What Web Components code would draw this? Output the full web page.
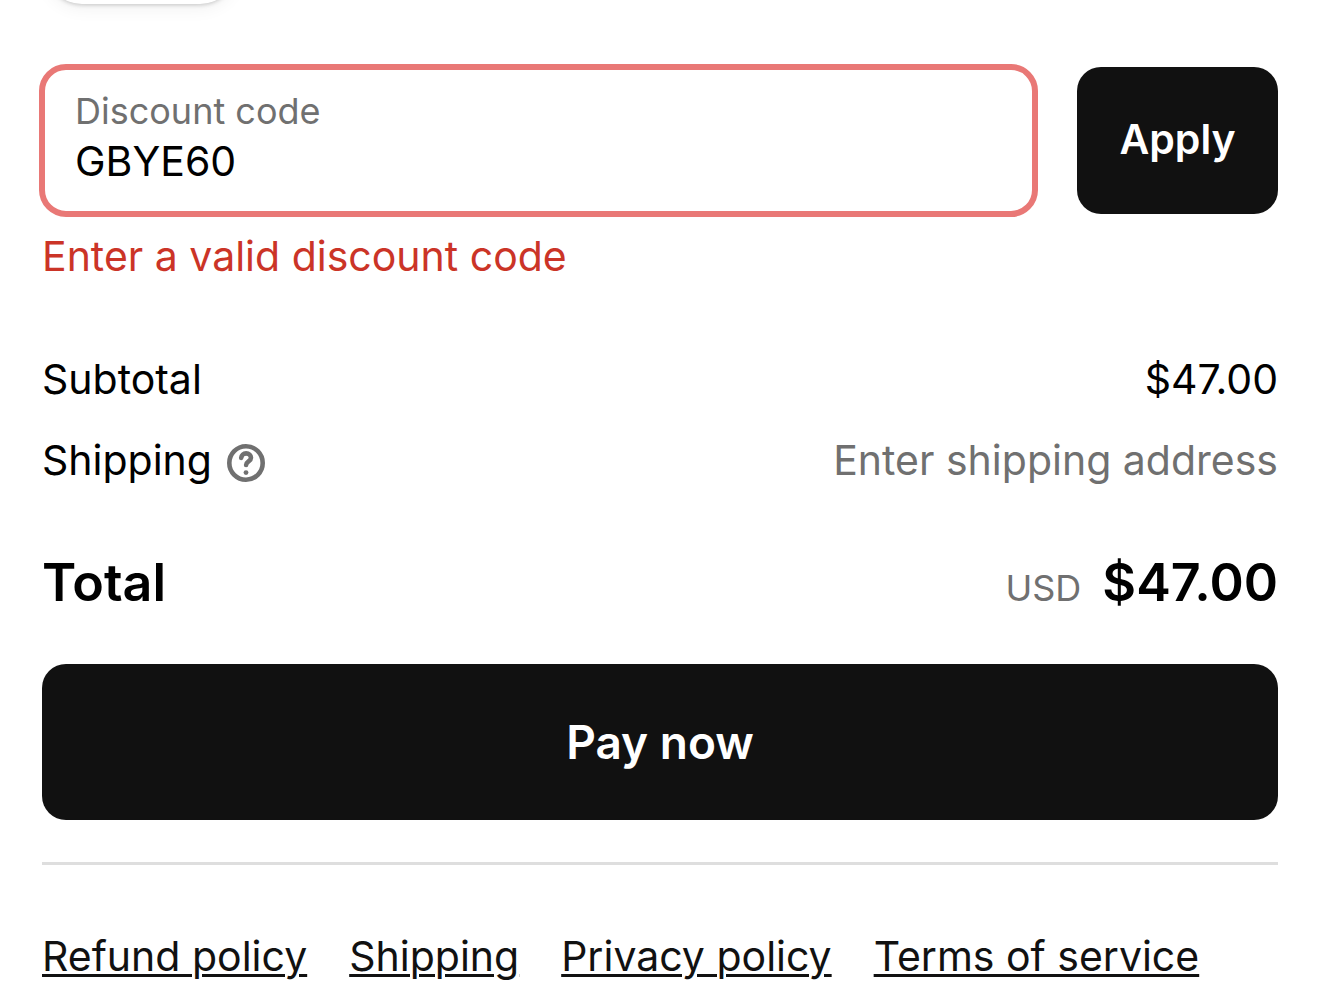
<!DOCTYPE html>
<html lang="en">
<head>
<meta charset="utf-8">
<title>Checkout</title>
<style>
body{margin:0;background:#fff;color:#000;font-family:Inter,"Liberation Sans",sans-serif;font-size:41px;line-height:54px}
</style>
</head>
<body>
<checkout-summary></checkout-summary>
<script>
const define=(name,html)=>customElements.define(name,class extends HTMLElement{
  constructor(){super();this.attachShadow({mode:'open'}).innerHTML=html;}
});

define('field-chip',`<style>
:host{display:flex;align-items:flex-end;height:4px;padding:0 46px 26px;overflow:hidden}
div{flex:none;width:190px;height:72px;border-radius:36px;background:#fff;box-shadow:0 1px 4px #0003,0 4px 18px #0000000f}
</style><div></div>`);

define('discount-form',`<style>
:host{display:block}
form{display:flex;align-items:center;gap:39px;margin:0 0 0 -3px}
.field{flex:1;min-width:0;box-sizing:border-box;height:153px;border:6px solid #e97876;border-radius:27px;padding:19px 30px;display:flex;flex-direction:column}
label{font-size:36px;line-height:45px;color:#707070}
input{font:inherit;line-height:54px;height:54px;width:100%;border:0;padding:0;margin:0;outline:0;background:none;color:#000}
button{font:inherit;font-weight:600;width:201px;height:147px;border:0;padding:0 0 3px;border-radius:24px;background:#111;color:#fff}
p{margin:12px 0 0;color:#cb3427}
</style>
<form onsubmit="return false">
<div class="field"><label for="code">Discount code</label><input id="code" value="GBYE60" aria-invalid="true" aria-describedby="err"></div>
<button type="submit">Apply</button>
</form>
<p id="err"><slot></slot></p>`);

define('help-icon',`<style>
:host{display:block;padding-top:6px}svg{display:block}
</style>
<svg width="38" height="38" viewBox="0 0 38 38" fill="none" stroke="#707070" role="img" aria-label="Help"><circle cx="19" cy="19" r="16.700" stroke-width="4.600"/><path d="M14.200 13.900c.2-2.800 2.200-4.500 4.900-4.500 2.900 0 4.900 1.800 4.900 4.300 0 3.700-4.800 3.700-4.900 7.300" stroke-width="4.600" stroke-linecap="round"/><circle cx="19" cy="28.600" r="2.400" fill="#707070" stroke="none"/></svg>`);

define('cost-line',`<style>
:host{display:flex;justify-content:space-between;align-items:center}
.name,.value{display:flex;align-items:center;gap:15px}
:host([muted]) .value{color:#707070}
:host([total]){font-size:52px;line-height:66px;font-weight:600;align-items:baseline}
:host([total]) .value{align-items:baseline;gap:21px}
</style>
<span class="name"><slot></slot></span><span class="value"><slot name="value"></slot></span>`);

define('pay-button',`<style>
:host{display:block}
button{display:block;width:100%;height:156px;border:0;border-radius:24px;background:#111;color:#fff;font:inherit;font-size:46px;font-weight:600}
</style><button type="button"><slot></slot></button>`);

define('policy-links',`<style>
:host{display:block;border-top:3px solid #dedede;padding-top:64px}
nav{display:flex;flex-wrap:wrap;gap:0 42px}
a{color:#111;text-decoration:underline;text-decoration-thickness:3px;text-underline-offset:3px}
</style>
<nav><a href="#refund">Refund policy</a><a href="#shipping">Shipping</a><a href="#privacy">Privacy policy</a><a href="#terms">Terms of service</a></nav>`);

define('checkout-summary',`<style>
:host{display:block}
main{padding:34px 42px 24px}
.lines{display:flex;flex-direction:column;gap:27px;margin:69px 0 63px}
cost-line[total]{margin:0 0 48px}
pay-button{margin-bottom:42px}
small{font-size:36px;line-height:45px;font-weight:400;color:#707070}
</style>
<field-chip></field-chip>
<main>
<discount-form>Enter a valid discount code</discount-form>
<div class="lines">
<cost-line>Subtotal<span slot="value">$47.00</span></cost-line>
<cost-line muted>Shipping <help-icon></help-icon><span slot="value">Enter shipping address</span></cost-line>
</div>
<cost-line total>Total<small slot="value">USD</small><span slot="value">$47.00</span></cost-line>
<pay-button>Pay now</pay-button>
<policy-links></policy-links>
</main>`);
</script>
</body>
</html>
